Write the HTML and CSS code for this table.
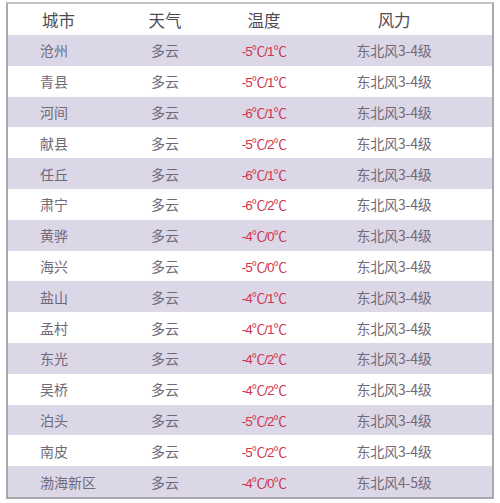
FILE: index.html
```html
<!DOCTYPE html>
<html lang="zh">
<head>
<meta charset="utf-8">
<link rel="stylesheet" href="styles.css">
</head>
<body>
<div class="wrap">
  <div class="table">
    <div class="row head">
      <div class="c1">城市</div><div class="c2">天气</div><div class="c3">温度</div><div class="c4">风力</div>
    </div>
    <div class="row alt"><div class="c1">沧州</div><div class="c2">多云</div><div class="c3 t">-5℃/1℃</div><div class="c4">东北风3-4级</div></div>
    <div class="row"><div class="c1">青县</div><div class="c2">多云</div><div class="c3 t">-5℃/1℃</div><div class="c4">东北风3-4级</div></div>
    <div class="row alt"><div class="c1">河间</div><div class="c2">多云</div><div class="c3 t">-6℃/1℃</div><div class="c4">东北风3-4级</div></div>
    <div class="row"><div class="c1">献县</div><div class="c2">多云</div><div class="c3 t">-5℃/2℃</div><div class="c4">东北风3-4级</div></div>
    <div class="row alt"><div class="c1">任丘</div><div class="c2">多云</div><div class="c3 t">-6℃/1℃</div><div class="c4">东北风3-4级</div></div>
    <div class="row"><div class="c1">肃宁</div><div class="c2">多云</div><div class="c3 t">-6℃/2℃</div><div class="c4">东北风3-4级</div></div>
    <div class="row alt"><div class="c1">黄骅</div><div class="c2">多云</div><div class="c3 t">-4℃/0℃</div><div class="c4">东北风3-4级</div></div>
    <div class="row"><div class="c1">海兴</div><div class="c2">多云</div><div class="c3 t">-5℃/0℃</div><div class="c4">东北风3-4级</div></div>
    <div class="row alt"><div class="c1">盐山</div><div class="c2">多云</div><div class="c3 t">-4℃/1℃</div><div class="c4">东北风3-4级</div></div>
    <div class="row"><div class="c1">孟村</div><div class="c2">多云</div><div class="c3 t">-4℃/1℃</div><div class="c4">东北风3-4级</div></div>
    <div class="row alt"><div class="c1">东光</div><div class="c2">多云</div><div class="c3 t">-4℃/2℃</div><div class="c4">东北风3-4级</div></div>
    <div class="row"><div class="c1">吴桥</div><div class="c2">多云</div><div class="c3 t">-4℃/2℃</div><div class="c4">东北风3-4级</div></div>
    <div class="row alt"><div class="c1">泊头</div><div class="c2">多云</div><div class="c3 t">-5℃/2℃</div><div class="c4">东北风3-4级</div></div>
    <div class="row"><div class="c1">南皮</div><div class="c2">多云</div><div class="c3 t">-5℃/2℃</div><div class="c4">东北风3-4级</div></div>
    <div class="row alt"><div class="c1">渤海新区</div><div class="c2">多云</div><div class="c3 t">-4℃/0℃</div><div class="c4">东北风4-5级</div></div>
  </div>
</div>
</body>
</html>
```

FILE: styles.css
```css
html, body {
  margin: 0;
  padding: 0;
  background: #ffffff;
}
body {
  font-family: "Noto Sans CJK SC", "Noto Sans", sans-serif;
  width: 500px;
  height: 503px;
  overflow: hidden;
}
.wrap {
  padding: 2px 6px 0 6px;
}
.table {
  width: 488px;
  box-sizing: border-box;
  border: 2px solid #a9a9ad;
  border-top-color: #c4c4c8;
  background: #fff;
}
.row {
  display: grid;
  grid-template-columns: 102px 110px 88px 172px 1fr;
  align-items: center;
  height: 30.8px;
  font-size: 14px;
  color: #6e6a7a;
}
.row.alt {
  background: #dcd7e7;
}
.row.head {
  height: 31px;
  font-size: 16.5px;
  color: #4f4b55;
}
.c1 {
  padding-left: 32px;
}
.head .c1 {
  padding-left: 34px;
}
.c2, .c3, .c4 {
  text-align: center;
}
.t {
  color: #d0334f;
  font-family: "Liberation Sans", "Noto Sans CJK SC", sans-serif;
  font-size: 13.5px;
  letter-spacing: -1px;
}
.head .c3 {
  color: #4f4b55;
  font-family: "Noto Sans CJK SC", sans-serif;
  font-size: 16.5px;
  letter-spacing: 0;
}
.c4 {
  letter-spacing: -0.2px;
}
```
